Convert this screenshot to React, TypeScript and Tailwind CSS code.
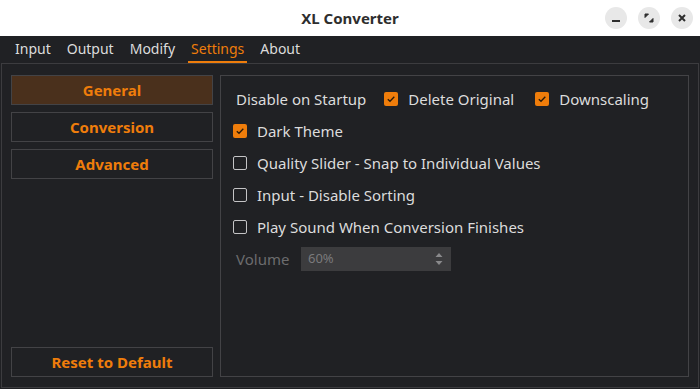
import { useState } from "react";

const tabs = ["Input", "Output", "Modify", "Settings", "About"];

function Check({ checked }: { checked: boolean }) {
  return checked ? (
    <span className="flex h-[14px] w-[14px] shrink-0 items-center justify-center rounded-[2px] bg-[#ef7d0b]">
      <svg width="10" height="10" viewBox="0 0 10 10">
        <path d="M1.8 5.2 L4 7.3 L8.3 2.7" fill="none" stroke="#2a1a08" strokeWidth="1.3" />
      </svg>
    </span>
  ) : (
    <span className="h-[14px] w-[14px] shrink-0 rounded-[2px] border-[1.5px] border-[#c4c4c6]" />
  );
}

function Row({ checked, label }: { checked: boolean; label: string }) {
  return (
    <div className="flex h-[32px] items-center gap-[10px]">
      <Check checked={checked} />
      <span>{label}</span>
    </div>
  );
}

export default function App() {
  const [tab] = useState("Settings");
  const side = ["General", "Conversion", "Advanced"];

  return (
    <div
      className="flex h-[389px] w-[700px] flex-col overflow-hidden bg-[#202124] text-[15px] text-[#dcdcdc]"
      style={{ fontFamily: '"Noto Sans", sans-serif' }}
    >
      {/* title bar */}
      <div className="relative flex h-[36px] shrink-0 items-center justify-center bg-white">
        <span className="text-[15px] font-bold text-[#2e2e2e]">XL Converter</span>
        <div className="absolute right-[7px] top-[7px] flex gap-[11px]">
          <span className="flex h-[22px] w-[22px] items-center justify-center rounded-full bg-[#e8e8e8]">
            <span className="mt-[6px] h-[2px] w-[8px] bg-[#2e2e2e]" />
          </span>
          <span className="flex h-[22px] w-[22px] items-center justify-center rounded-full bg-[#e8e8e8]">
            <svg width="10" height="10" viewBox="0 0 10 10">
              <path d="M1 4.5 V1 H4.5 Z M9 5.5 V9 H5.5 Z" fill="#2e2e2e" stroke="#2e2e2e" strokeWidth="1" strokeLinejoin="round" />
            </svg>
          </span>
          <span className="flex h-[22px] w-[22px] items-center justify-center rounded-full bg-[#e8e8e8]">
            <svg width="10" height="10" viewBox="0 0 10 10">
              <path d="M2 2 L8 8 M8 2 L2 8" stroke="#2e2e2e" strokeWidth="2" />
            </svg>
          </span>
        </div>
      </div>

      {/* tab bar */}
      <div className="flex h-[27px] shrink-0 items-stretch gap-[10px] pl-[12px] text-[14px]">
        {tabs.map((t) => (
          <div
            key={t}
            className={`flex items-center px-[3px] pb-[1px] ${
              t === tab ? "border-b-[2px] border-[#ef7d0b] text-[#ef7d0b]" : "border-b-[2px] border-transparent text-[#dcdcdc]"
            }`}
          >
            {t}
          </div>
        ))}
      </div>

      {/* frame */}
      <div className="mx-[1px] mb-[1px] flex min-h-0 flex-1 gap-[7px] border border-[#3c3c3f] px-[9px] pb-[10px] pt-[11px]">
        <div className="flex w-[202px] flex-col gap-[7px]">
          {side.map((s, i) => (
            <div
              key={s}
              className={`flex h-[30px] items-center justify-center border border-[#434346] font-bold text-[#ef7d0b] ${
                i === 0 ? "bg-[#4a301c]" : ""
              }`}
            >
              {s}
            </div>
          ))}
          <div className="mt-auto flex h-[30px] items-center justify-center border border-[#434346] font-bold text-[#ef7d0b]">
            Reset to Default
          </div>
        </div>

        <div className="flex-1 border border-[#434346] pl-[12px] pt-[7px]">
          <div className="flex h-[32px] items-center">
            <span className="ml-[3px]">Disable on Startup</span>
            <span className="ml-[18px]">
              <Check checked />
            </span>
            <span className="ml-[10px]">Delete Original</span>
            <span className="ml-[21px]">
              <Check checked />
            </span>
            <span className="ml-[10px]">Downscaling</span>
          </div>
          <Row checked label="Dark Theme" />
          <Row checked={false} label="Quality Slider - Snap to Individual Values" />
          <Row checked={false} label="Input - Disable Sorting" />
          <Row checked={false} label="Play Sound When Conversion Finishes" />
          <div className="flex h-[32px] items-center">
            <span className="ml-[3px] w-[65px] text-[#6c6c6e]">Volume</span>
            <div className="flex h-[24px] w-[150px] items-center justify-between bg-[#3c3c3e] pl-[7px] pr-[8px] text-[13px] text-[#7a7a7c]">
              <span>60%</span>
              <svg width="8" height="16" viewBox="0 0 8 16">
                <path d="M0.5 6 L4 2 L7.5 6 Z M0.5 10 L4 14 L7.5 10 Z" fill="#8a8a8c" />
              </svg>
            </div>
          </div>
        </div>
      </div>
    </div>
  );
}
